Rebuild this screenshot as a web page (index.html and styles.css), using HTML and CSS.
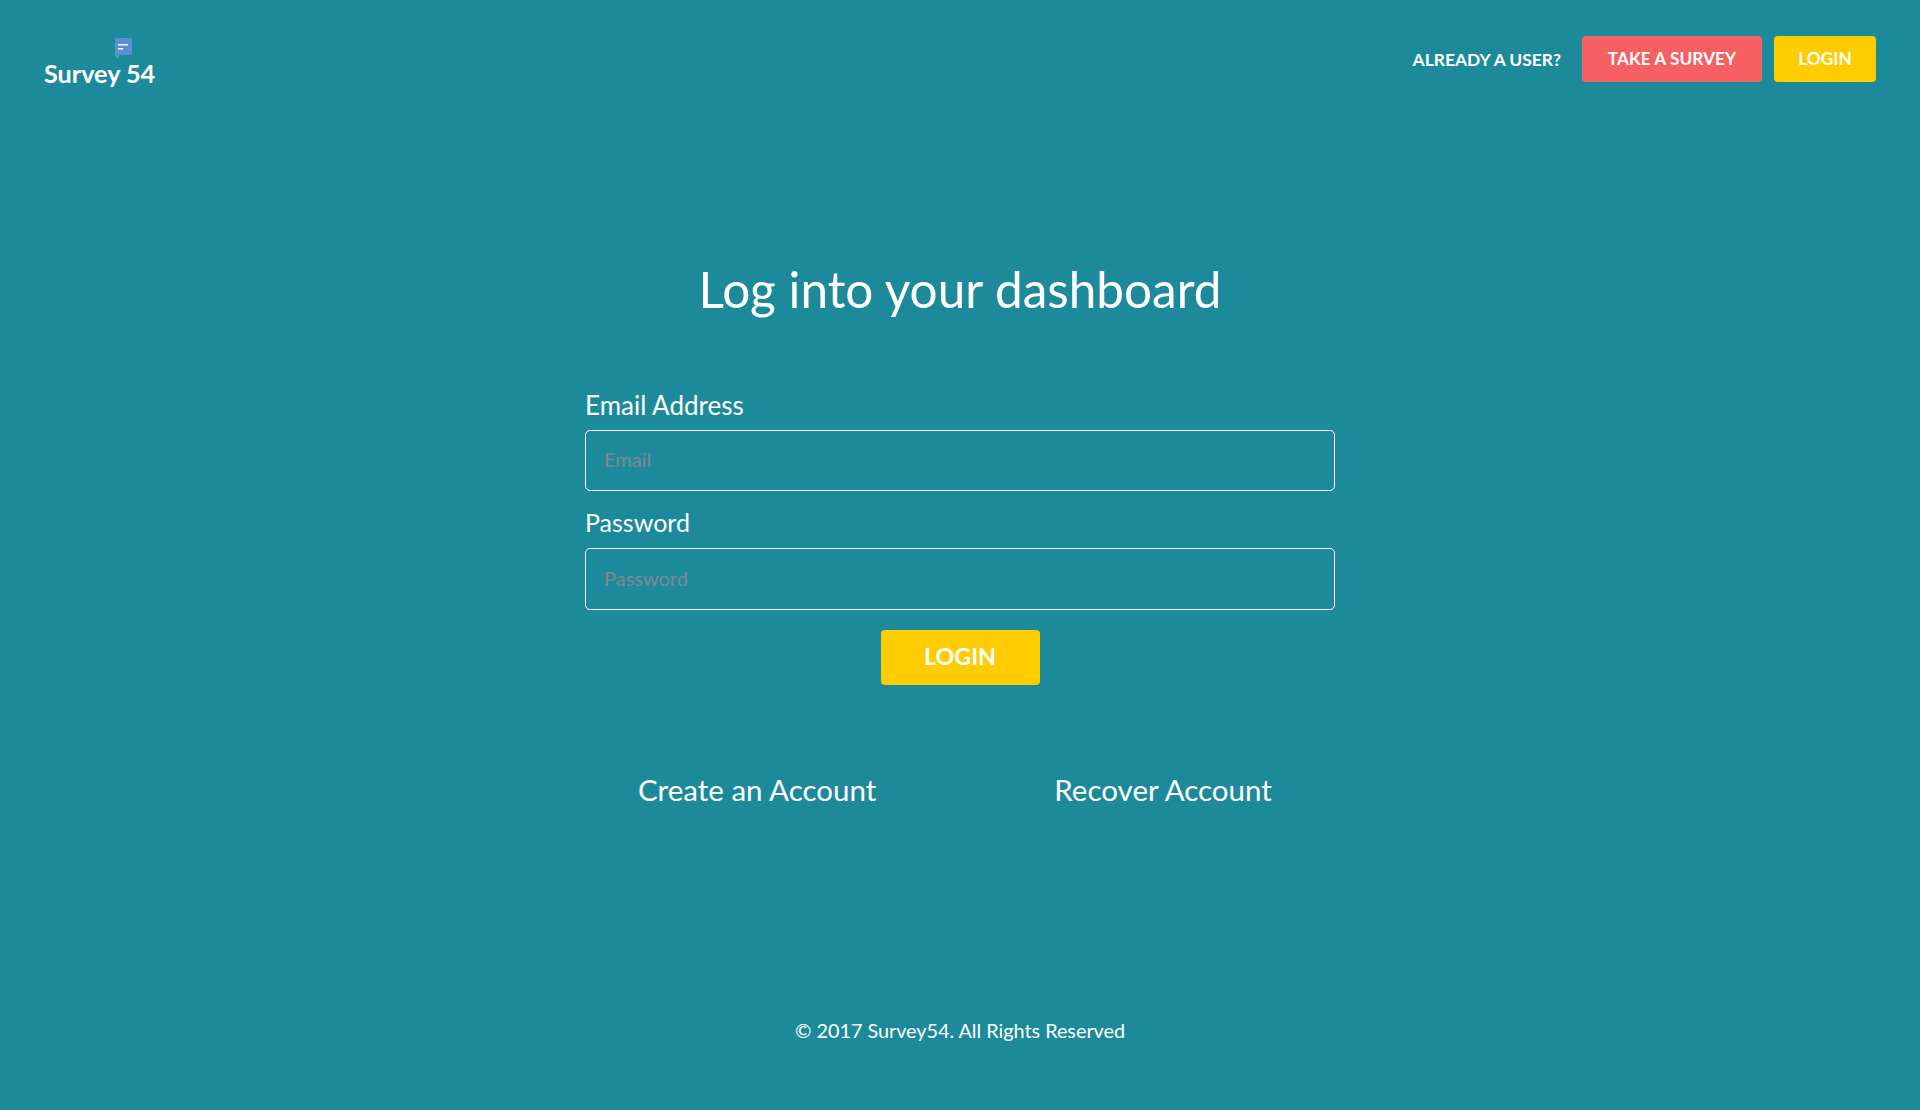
FILE: index.html
```html
<!DOCTYPE html>
<html lang="en">
<head>
    <meta charset="UTF-8">
    <meta name="viewport" content="width=device-width, initial-scale=1.0">
    <title>Survey 54 - Login</title>
    <link rel="stylesheet" href="styles.css">
</head>
<body>
<header class="top-bar">
    <a class="logo" href="#">
        <svg class="logo-icon" width="17" height="21" viewBox="0 0 17 21">
            <path d="M1.500 0h14a1.500 1.500 0 0 1 1.500 1.500v14a1.500 1.500 0 0 1-1.500 1.500H4l-.5 4L0 17.500V1.500A1.500 1.500 0 0 1 1.500 0z" fill="#5a90d6"/>
            <rect x="3" y="6" width="10" height="1.500" fill="#fff"/>
            <rect x="3" y="10" width="5" height="1.500" fill="#fff"/>
        </svg>
        <span class="logo-text">Survey 54</span>
    </a>
    <nav class="top-nav">
        <span class="already">ALREADY A USER?</span>
        <a class="btn btn-survey" href="#">TAKE A SURVEY</a>
        <a class="btn btn-login" href="#">LOGIN</a>
    </nav>
</header>

<main class="content">
    <h1>Log into your dashboard</h1>
    <form class="login-form">
        <label for="email">Email Address</label>
        <input id="email" type="text" placeholder="Email">
        <label for="password">Password</label>
        <input id="password" type="password" placeholder="Password">
        <button class="submit" type="button">LOGIN</button>
    </form>
    <div class="links">
        <a href="#">Create an Account</a>
        <a href="#">Recover Account</a>
    </div>
</main>

<footer class="footer">© 2017 Survey54. All Rights Reserved</footer>
</body>
</html>
```

FILE: styles.css
```css
* {
    box-sizing: border-box;
}
body {
    margin: 0;
    height: 1110px;
    overflow: hidden;
    background-color: #1d8a9b;
    color: #fff;
    font-family: "Lato", "Noto Sans", sans-serif;
}
a {
    color: #fff;
    text-decoration: none;
}
.top-bar {
    display: flex;
    justify-content: space-between;
    align-items: flex-start;
    height: 110px;
    padding: 36px 44px 0 44px;
}
.logo {
    display: flex;
    flex-direction: column;
    align-items: flex-end;
    margin-top: 2px;
}
.logo-icon {
    margin-right: 23px;
    margin-bottom: -2px;
}
.logo-text {
    font-size: 25.200px;
    font-weight: 700;
    line-height: 32px;
}
.top-nav {
    display: flex;
    align-items: center;
}
.already {
    font-size: 17.400px;
    font-weight: 700;
    margin-right: 21px;
}
.btn {
    display: block;
    height: 46px;
    line-height: 46px;
    font-size: 17.300px;
    font-weight: 700;
    text-align: center;
    border-radius: 4px;
}
.btn-survey {
    width: 180px;
    background-color: #f76063;
    margin-right: 12px;
}
.btn-login {
    width: 102px;
    background-color: #ffcc00;
}
.content {
    display: flex;
    flex-direction: column;
    align-items: center;
}
h1 {
    margin: 149px 0 0 0;
    font-size: 49.500px;
    line-height: 60px;
    font-weight: 400;
}
.login-form {
    display: flex;
    flex-direction: column;
    width: 750px;
    margin-top: 71px;
}
.login-form label {
    font-size: 26px;
    line-height: 30px;
    margin-bottom: 10px;
}
.login-form label:nth-of-type(2) {
    font-size: 25px;
    margin-top: 1px;
    margin-bottom: 11px;
}
.login-form input {
    height: 61px;
    margin-bottom: 15px;
    padding: 0 18px 3px 18px;
    background: transparent;
    border: 1px solid #fff;
    border-radius: 5px;
    color: #fff;
    font-family: inherit;
    font-size: 20px;
}
.login-form input:last-of-type {
    height: 62px;
    margin-bottom: 20px;
}
.login-form input::placeholder {
    color: #7d8993;
}
.submit {
    align-self: center;
    width: 159px;
    height: 55px;
    padding-bottom: 4px;
    border: none;
    border-radius: 4px;
    background-color: #ffcc00;
    color: #fff;
    font-family: inherit;
    font-size: 23.300px;
    font-weight: 700;
}
.links {
    display: flex;
    width: 750px;
    margin-top: 87px;
    font-size: 29.500px;
    line-height: 36px;
}
.links a:first-child {
    margin-left: 53px;
    margin-right: 178px;
}
.footer {
    margin-top: 210px;
    text-align: center;
    font-size: 19.800px;
    line-height: 24px;
}
```
